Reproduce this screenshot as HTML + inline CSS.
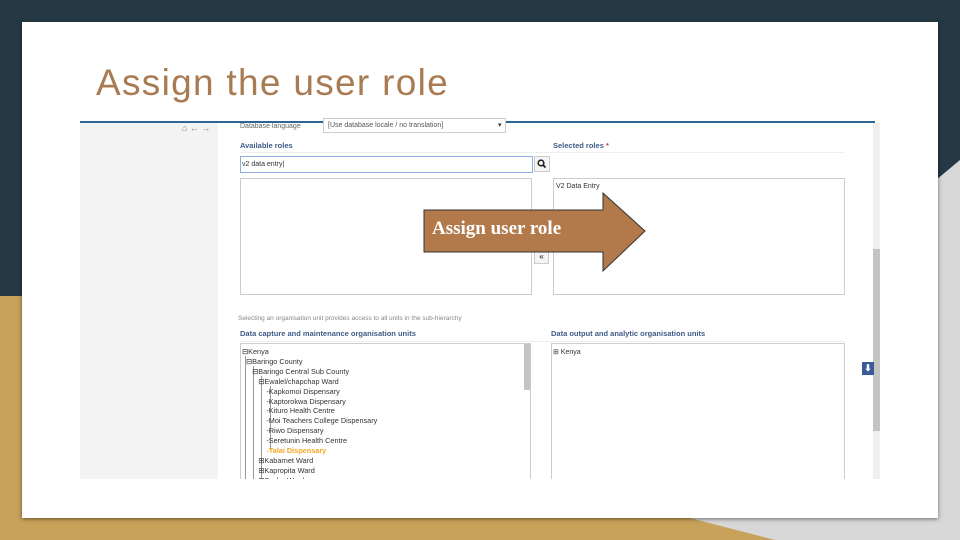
<!DOCTYPE html>
<html><head><meta charset="utf-8"><style>
*{margin:0;padding:0;box-sizing:border-box}
body{width:960px;height:540px;overflow:hidden;position:relative;background:#253944;font-family:"Liberation Sans",sans-serif}
.abs{position:absolute}
.card{left:22px;top:22px;width:916px;height:496px;background:#fff;box-shadow:0 1px 4px rgba(0,0,0,.5)}
.t{font-size:7px;color:#333;white-space:nowrap}
.h{font-size:7.5px;font-weight:bold;color:#3d5b86;white-space:nowrap}
.box{border:1px solid #ccc;background:#fff}
</style></head><body>
<svg class="abs" style="left:0;top:0" width="960" height="540">
<polygon points="0,296 960,296 960,540 0,540" fill="#c8a25a"/>
<polygon points="960,160 900,210 690,518 775,540 960,540" fill="#d8d8d8"/>
</svg>
<div class="abs card"></div>
<div class="abs" style="left:96px;top:62px;font-size:37px;color:#a87b52;letter-spacing:1.3px;white-space:nowrap">Assign the user role</div>
<!-- embedded screenshot -->
<div class="abs" style="left:80px;top:121px;width:800px;height:358px;background:#fff;overflow:hidden">
 <div class="abs" style="left:0;top:0;width:795px;height:2px;background:#2b6699"></div>
 <div class="abs" style="left:0;top:2px;width:138px;height:356px;background:#f3f3f3"></div>
 <div class="abs t" style="left:102px;top:2px;color:#888;font-size:9px">&#8962; &#8592; &#8594;</div>
 <div class="abs" style="left:793px;top:2px;width:7px;height:356px;background:#efefef"></div>
 <div class="abs" style="left:793px;top:128px;width:7px;height:182px;background:#c4c4c4"></div>
</div>
<div class="abs t" style="left:240px;top:123px;color:#666">Database language</div>
<div class="abs box" style="left:323px;top:118px;width:183px;height:15px"></div>
<div class="abs t" style="left:328px;top:122px;color:#555">[Use database locale / no translation]</div>
<div class="abs t" style="left:498px;top:121px">▾</div>
<div class="abs h" style="left:240px;top:141px">Available roles</div>
<div class="abs h" style="left:553px;top:141px">Selected roles <span style="color:#d33">*</span></div>
<div class="abs" style="left:240px;top:152px;width:605px;height:1px;background:#eee"></div>
<div class="abs" style="left:240px;top:156px;width:293px;height:17px;border:1px solid #8cb0dd"></div>
<div class="abs t" style="left:242px;top:161px">v2 data entry|</div>
<div class="abs box" style="left:534px;top:156px;width:16px;height:16px;background:#f4f4f4"></div>
<svg class="abs" style="left:537px;top:159px" width="10" height="10"><circle cx="4" cy="4" r="2.8" fill="none" stroke="#222" stroke-width="1.6"/><line x1="6" y1="6" x2="8.5" y2="8.5" stroke="#222" stroke-width="1.8"/></svg>
<div class="abs box" style="left:240px;top:178px;width:292px;height:117px"></div>
<div class="abs box" style="left:553px;top:178px;width:292px;height:117px"></div>
<div class="abs t" style="left:556px;top:183px">V2 Data Entry</div>
<div class="abs box" style="left:534px;top:249px;width:15px;height:15px;background:#f4f4f4;font-size:8px;text-align:center;line-height:13px">«</div>
<svg class="abs" style="left:420px;top:190px" width="230" height="85">
<polygon points="4,20 183,20 183,3 225,41 183,81 183,62 4,62" fill="#b27a4a" stroke="#333" stroke-width="1"/>
</svg>
<div class="abs" style="left:432px;top:218px;font-family:'Liberation Serif',serif;font-weight:bold;font-size:19px;color:#fff;white-space:nowrap">Assign user role</div>
<div class="abs t" style="left:238px;top:315px;color:#888;font-size:6.5px">Selecting an organisation unit provides access to all units in the sub-hierarchy</div>
<div class="abs h" style="left:240px;top:329px">Data capture and maintenance organisation units</div>
<div class="abs h" style="left:551px;top:329px">Data output and analytic organisation units</div>
<div class="abs" style="left:240px;top:341px;width:605px;height:1px;background:#eee"></div>
<div class="abs box" style="left:240px;top:343px;width:291px;height:136px;border-bottom:none"></div>
<div class="abs" style="left:524px;top:344px;width:6px;height:46px;background:#c4c4c4"></div>
<div class="abs box" style="left:551px;top:343px;width:294px;height:136px;border-bottom:none"></div>
<div class="abs t" style="left:553px;top:348px">⊞ Kenya</div>
<div class="abs" style="left:245px;top:356px;width:1px;height:123px;background:#999"></div>
<div class="abs" style="left:253px;top:366px;width:1px;height:113px;background:#999"></div>
<div class="abs" style="left:261px;top:376px;width:1px;height:103px;background:#999"></div>
<div class="abs" style="left:270px;top:386px;width:1px;height:64px;background:#999"></div>
<div class="abs t" style="left:242px;top:347px;line-height:9.9px;font-size:7.3px">
⊟Kenya<br>
&nbsp;&nbsp;⊟Baringo County<br>
&nbsp;&nbsp;&nbsp;&nbsp;&nbsp;⊟Baringo Central Sub County<br>
&nbsp;&nbsp;&nbsp;&nbsp;&nbsp;&nbsp;&nbsp;&nbsp;⊟Ewalel/chapchap Ward<br>
&nbsp;&nbsp;&nbsp;&nbsp;&nbsp;&nbsp;&nbsp;&nbsp;&nbsp;&nbsp;&nbsp;&nbsp;-Kapkomoi Dispensary<br>
&nbsp;&nbsp;&nbsp;&nbsp;&nbsp;&nbsp;&nbsp;&nbsp;&nbsp;&nbsp;&nbsp;&nbsp;-Kaptorokwa Dispensary<br>
&nbsp;&nbsp;&nbsp;&nbsp;&nbsp;&nbsp;&nbsp;&nbsp;&nbsp;&nbsp;&nbsp;&nbsp;-Kituro Health Centre<br>
&nbsp;&nbsp;&nbsp;&nbsp;&nbsp;&nbsp;&nbsp;&nbsp;&nbsp;&nbsp;&nbsp;&nbsp;-Moi Teachers College Dispensary<br>
&nbsp;&nbsp;&nbsp;&nbsp;&nbsp;&nbsp;&nbsp;&nbsp;&nbsp;&nbsp;&nbsp;&nbsp;-Riwo Dispensary<br>
&nbsp;&nbsp;&nbsp;&nbsp;&nbsp;&nbsp;&nbsp;&nbsp;&nbsp;&nbsp;&nbsp;&nbsp;-Seretunin Health Centre<br>
&nbsp;&nbsp;&nbsp;&nbsp;&nbsp;&nbsp;&nbsp;&nbsp;&nbsp;&nbsp;&nbsp;&nbsp;<span style="color:#f5a623;font-weight:bold">-Talai Dispensary</span><br>
&nbsp;&nbsp;&nbsp;&nbsp;&nbsp;&nbsp;&nbsp;&nbsp;⊞Kabarnet Ward<br>
&nbsp;&nbsp;&nbsp;&nbsp;&nbsp;&nbsp;&nbsp;&nbsp;⊞Kapropita Ward<br>
&nbsp;&nbsp;&nbsp;&nbsp;&nbsp;&nbsp;&nbsp;&nbsp;⊞Sacho Ward
</div>
<div class="abs" style="left:862px;top:362px;width:12px;height:13px;background:#3a5a9a;color:#fff;font-size:9px;text-align:center;line-height:13px;font-weight:bold">⬇</div>
<div class="abs" style="left:80px;top:479px;width:820px;height:39px;background:#fff"></div>
</body></html>
